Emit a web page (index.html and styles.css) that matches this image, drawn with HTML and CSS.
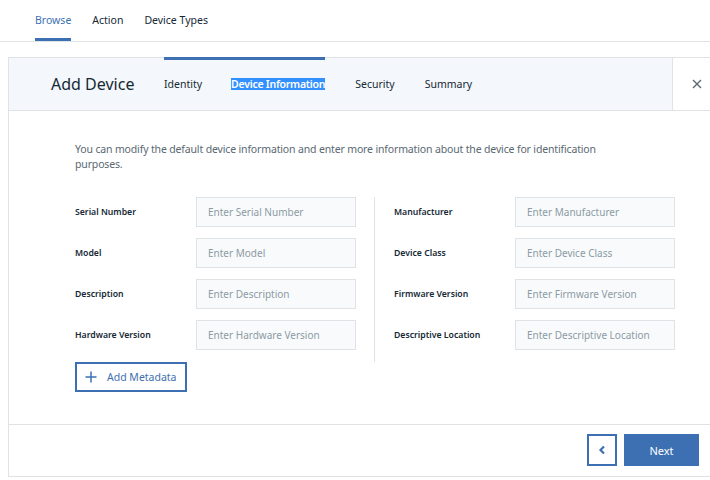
FILE: index.html
```html
<!DOCTYPE html>
<html>
<head>
<meta charset="utf-8">
<link rel="stylesheet" href="styles.css">
</head>
<body>
<nav class="topnav">
  <a class="tab active">Browse</a>
  <a class="tab">Action</a>
  <a class="tab">Device Types</a>
</nav>
<section class="modal">
  <header class="modal-header">
    <h1 class="title">Add Device</h1>
    <ol class="steps">
      <li class="step done">Identity</li>
      <li class="step current"><span class="sel">Device Information</span></li>
      <li class="step">Security</li>
      <li class="step">Summary</li>
    </ol>
    <button class="close" aria-label="Close">
      <svg width="10" height="10" viewBox="0 0 10 10"><path d="M1 1L9 9M9 1L1 9" stroke="#5a6872" stroke-width="1.4" fill="none"/></svg>
    </button>
  </header>
  <div class="modal-body">
    <p class="intro">You can modify the default device information and enter more information about the device for identification purposes.</p>
    <div class="form">
      <div class="col left">
        <label class="row"><span class="lbl">Serial Number</span><input class="field" placeholder="Enter Serial Number"></label>
        <label class="row"><span class="lbl">Model</span><input class="field" placeholder="Enter Model"></label>
        <label class="row"><span class="lbl">Description</span><input class="field" placeholder="Enter Description"></label>
        <label class="row"><span class="lbl">Hardware Version</span><input class="field" placeholder="Enter Hardware Version"></label>
      </div>
      <div class="col right">
        <label class="row"><span class="lbl">Manufacturer</span><input class="field" placeholder="Enter Manufacturer"></label>
        <label class="row"><span class="lbl">Device Class</span><input class="field" placeholder="Enter Device Class"></label>
        <label class="row"><span class="lbl">Firmware Version</span><input class="field" placeholder="Enter Firmware Version"></label>
        <label class="row"><span class="lbl">Descriptive Location</span><input class="field" placeholder="Enter Descriptive Location"></label>
      </div>
    </div>
    <button class="add-meta">
      <svg width="12" height="12" viewBox="0 0 12 12"><path d="M6 0.5V11.5M0.5 6H11.5" stroke="#3d70b2" stroke-width="1.5" fill="none"/></svg>
      <span>Add Metadata</span>
    </button>
  </div>
  <footer class="modal-footer">
    <button class="back" aria-label="Back">
      <svg width="8" height="10" viewBox="0 0 8 10"><path d="M6 1.5L2.5 5L6 8.5" stroke="#3d70b2" stroke-width="2.2" fill="none"/></svg>
    </button>
    <button class="next">Next</button>
  </footer>
</section>
</body>
</html>
```
FILE: styles.css
```css
* { box-sizing: border-box; }
html, body { margin: 0; padding: 0; background: #fff; }
body {
  font-family: "Noto Sans", "Open Sans", sans-serif;
  color: #152935;
  width: 710px;
  height: 480px;
  overflow: hidden;
}
.topnav {
  display: flex;
  gap: 21px;
  padding-left: 35px;
  height: 42px;
  border-bottom: 1px solid #dfe3e6;
}
.tab {
  display: flex;
  align-items: center;
  font-size: 10.5px;
  color: #152935;
  border-bottom: 3px solid transparent;
  padding-top: 2px;
}
.tab.active {
  color: #3d70b2;
  border-bottom-color: #3d70b2;
}
.modal {
  margin: 15px 0 0 8px;
  width: 702px;
  border-left: 1px solid #dfe3e6;
  border-bottom: 1px solid #dfe3e6;
}
.modal-header {
  display: flex;
  align-items: stretch;
  height: 54px;
  background: #f4f7fb;
  border-top: 1px solid #dfe3e6;
  border-bottom: 1px solid #dfe3e6;
}
.title {
  margin: 0;
  padding-left: 42px;
  width: 155px;
  display: flex;
  align-items: center;
  font-size: 16px;
  font-weight: 400;
  color: #152935;
}
.steps {
  list-style: none;
  margin: -1px 0 0 0;
  padding: 0;
  display: flex;
  flex: 1;
}
.step {
  display: flex;
  align-items: center;
  font-size: 10.5px;
  color: #152935;
  border-top: 3px solid transparent;
  margin-right: 30px;
  padding-bottom: 2px;
}
.step.done {
  margin-right: 0;
  padding-right: 29px;
  border-top-color: #3d70b2;
}
.step.current {
  border-top-color: #3d70b2;
}
.sel {
  background: #3390ff;
  color: #fff;
  font-weight: 600;
  line-height: 12px;
  letter-spacing: -0.25px;
}
.close {
  width: 38px;
  border: 0;
  border-left: 1px solid #dfe3e6;
  background: #fff;
  display: flex;
  align-items: center;
  justify-content: flex-end;
  padding: 0 8px 0 0;
}
.modal-body {
  padding: 31px 0 32px 66px;
  border-bottom: 1px solid #dfe3e6;
}
.intro {
  margin: 0 0 25px;
  font-size: 10.5px;
  line-height: 15px;
  color: #5a6872;
  width: 560px;
  letter-spacing: -0.15px;
}
.form {
  display: flex;
}
.col {
  display: flex;
  flex-direction: column;
  gap: 11px;
}
.col.left {
  width: 299px;
}
.col.right {
  border-left: 1px solid #dfe3e6;
  padding-left: 19px;
  padding-bottom: 12px;
}
.row {
  display: flex;
  align-items: center;
}
.lbl {
  width: 121px;
  font-size: 8.7px;
  font-weight: 600;
  color: #152935;
}
.field {
  width: 160px;
  height: 30px;
  border: 1px solid #dfe3e6;
  background: #f8fafb;
  padding: 0 0 0 11px;
  font-family: inherit;
  font-size: 10px;
  color: #152935;
  outline: none;
}
.field::placeholder { color: #8c9ba5; }
.add-meta {
  display: flex;
  align-items: center;
  gap: 10px;
  width: 112px;
  height: 30px;
  padding: 0 0 0 8px;
  border: 2px solid #3d70b2;
  background: #fff;
  color: #3d70b2;
  font-family: inherit;
  font-size: 10.5px;
  margin-left: 0;
}
.modal-footer {
  display: flex;
  justify-content: flex-end;
  gap: 7px;
  padding: 9px 11px 10px 0;
  height: 51px;
}
.back {
  width: 30px;
  height: 32px;
  border: 2px solid #3d70b2;
  background: #fff;
  display: flex;
  align-items: center;
  justify-content: center;
  padding: 0;
}
.next {
  width: 75px;
  height: 32px;
  border: 0;
  background: #3d70b2;
  color: #fff;
  font-family: inherit;
  font-size: 11px;
}
```
